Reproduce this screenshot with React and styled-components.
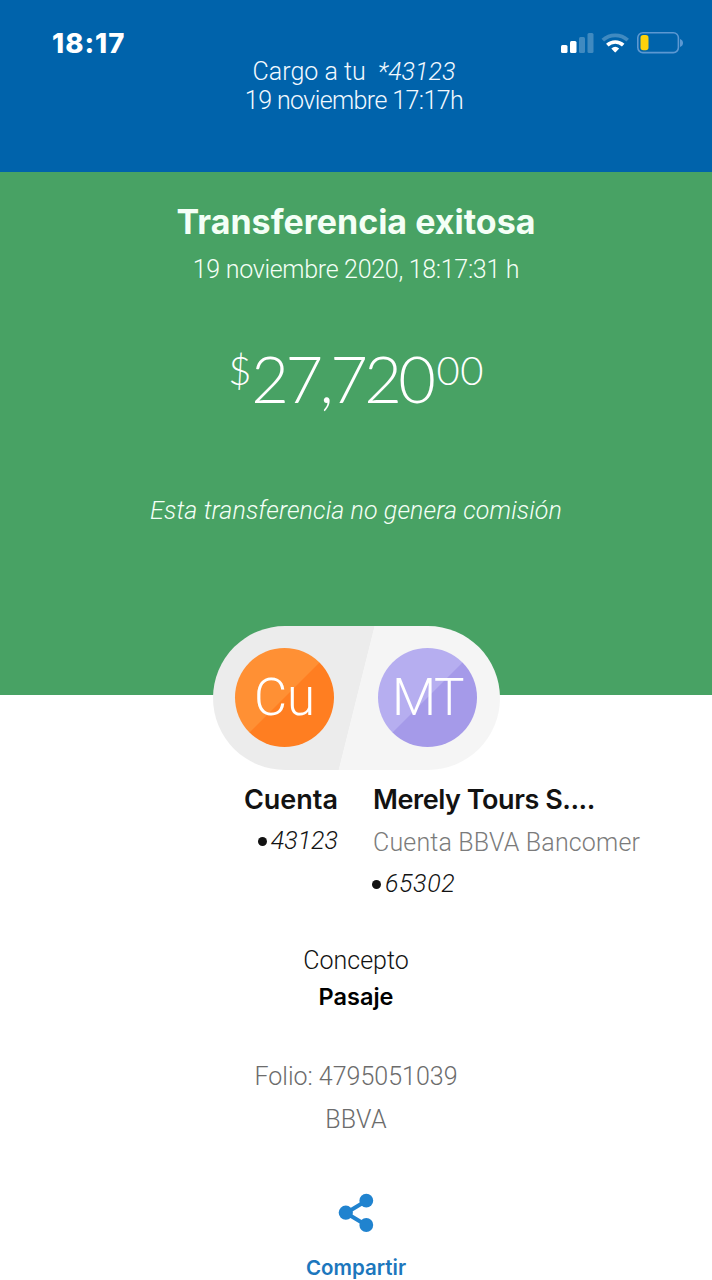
import React from 'react';
import styled, { createGlobalStyle } from 'styled-components';

const GlobalStyle = createGlobalStyle`
  * { box-sizing: border-box; }
  body {
    margin: 0;
    background: #fff;
    font-family: Roboto, "Liberation Sans", sans-serif;
    color: #121212;
  }
`;

const Screen = styled.main`
  display: flex;
  flex-direction: column;
  width: 712px;
  height: 1280px;
  overflow: hidden;
  background: #fff;
`;

const Header = styled.header`
  flex: none;
  display: flex;
  flex-direction: column;
  height: 172px;
  background: #0063ab;
  color: #f2f9ff;
`;

const StatusBar = styled.div`
  display: flex;
  justify-content: space-between;
  align-items: center;
  height: 26px;
  margin-top: 30px;
  padding: 0 28px 0 52px;
`;

const Clock = styled.time`
  font: 800 27.5px/28px Inter, sans-serif;
  letter-spacing: 1px;
  color: #fff;
`;

const StatusIcons = styled.svg`
  display: block;
  width: 124px;
  height: 26px;
`;

/* One line of text; the height sets the vertical rhythm. */
const Line = styled.p`
  margin: ${(p) => p.$top || 0}px 0 0;
  height: ${(p) => p.$height || 30}px;
  line-height: ${(p) => p.$height || 30}px;
  font-size: ${(p) => p.$size || 25}px;
  font-weight: 300;
  font-style: ${(p) => (p.$italic ? 'italic' : 'normal')};
  letter-spacing: ${(p) => p.$spacing || 0}px;
  color: ${(p) => p.$color || 'inherit'};
  white-space: pre;
`;

const StrongLine = styled(Line)`
  font-family: Inter, sans-serif;
  font-weight: ${(p) => p.$weight || 600};
`;

const ChargeInfo = styled.div`
  padding: 1px 4px 0 0;
  text-align: center;
`;

const Result = styled.section`
  flex: none;
  display: flex;
  flex-direction: column;
  align-items: center;
  height: 522.5px;
  padding-top: 30px;
  background: #48a264;
  color: #f4fff6;
`;

const Amount = styled.div`
  display: flex;
  align-items: flex-start;
  height: 64px;
  margin-top: 60px;
  font-family: Lato, sans-serif;
  font-weight: 300;
  color: #fff;
`;

const AmountPart = styled.span`
  font-size: ${(p) => p.$size}px;
  line-height: ${(p) => p.$height}px;
  letter-spacing: ${(p) => p.$spacing}px;
  margin-left: ${(p) => p.$left || 0}px;
`;

const Pill = styled.div`
  flex: none;
  display: flex;
  align-items: center;
  justify-content: space-between;
  width: 287px;
  height: 143.5px;
  margin: -68.5px auto 0;
  padding: 0 22.5px;
  border-radius: 72px;
  background: linear-gradient(104deg, #ececec 49.9%, #f5f5f5 50.1%);
`;

const Avatar = styled.div`
  width: 99px;
  height: 99px;
  border-radius: 50%;
  background: linear-gradient(135deg, ${(p) => p.$light} 49.7%, ${(p) => p.$dark} 50.3%);
  color: #fff;
  font-size: 51px;
  font-weight: 300;
  line-height: 100px;
  letter-spacing: ${(p) => p.$spacing}px;
  text-align: center;
`;

const Parties = styled.section`
  flex: none;
  display: grid;
  grid-template-columns: 338px 1fr;
  column-gap: 35px;
  height: 128px;
  margin-top: 14px;
`;

const Party = styled.div`
  display: flex;
  flex-direction: column;
  align-items: ${(p) => p.$align};
`;

const AccountNumber = styled.div`
  display: flex;
  align-items: center;
  gap: 4px;
  margin: ${(p) => p.$top}px 0 0 ${(p) => p.$left || 0}px;

  &::before {
    content: '';
    width: 9px;
    height: 9px;
    margin-top: 1px;
    border-radius: 50%;
    background: #121212;
  }
`;

const Details = styled.section`
  display: flex;
  flex-direction: column;
  align-items: center;
  margin-top: 34px;
`;

const ShareButton = styled.button`
  flex: none;
  display: flex;
  flex-direction: column;
  align-items: center;
  margin: 58px auto 0;
  padding: 0;
  border: 0;
  background: none;
  color: #1c77bd;
`;

const ShareIcon = styled.svg`
  display: block;
  width: 36px;
  height: 40px;
`;

export default function App() {
  return (
    <>
      <GlobalStyle />
      <Screen>
        <Header>
          <StatusBar>
            <Clock>18:17</Clock>
            <StatusIcons viewBox="560 30 124 26" aria-hidden="true">
              <g fill="#fff">
                <rect x="561" y="45" width="6.5" height="8" rx="1.5" />
                <rect x="570" y="41" width="6.5" height="12" rx="1.5" />
                <rect x="579" y="37" width="6" height="16" rx="1.5" opacity=".25" />
                <rect x="587.5" y="33" width="6" height="20" rx="1.5" opacity=".25" />
              </g>
              <g fill="none" stroke="#fff" strokeWidth="3.7">
                <path d="M602.8 40.2a18.3 18.3 0 0 1 24.9 0" opacity=".25" />
                <path d="M607.3 45.1a11.8 11.8 0 0 1 15.9 0" />
              </g>
              <path d="M611.3 48.6a6 6 0 0 1 7.9 0l-3.3 3.5q-.7.7-1.3 0z" fill="#fff" />
              <rect x="637.8" y="32.8" width="40.6" height="19.8" rx="5" fill="none" stroke="#5c98d2" strokeWidth="1.6" />
              <rect x="640.5" y="35" width="8" height="15.3" rx="2.8" fill="#ffd20a" />
              <path d="M680 39q3 1.2 3 4t-3 4z" fill="#5c98d2" />
            </StatusIcons>
          </StatusBar>
          <ChargeInfo>
            <Line $height={29}>Cargo a tu{'  '}<em>*43123</em></Line>
            <Line $height={29} $spacing={-0.6}>19 noviembre 17:17h</Line>
          </ChargeInfo>
        </Header>

        <Result>
          <StrongLine as="h1" $height={40} $size={34} $weight={700}>Transferencia exitosa</StrongLine>
          <Line $top={13} $spacing={-0.3}>19 noviembre 2020, 18:17:31 h</Line>
          <Amount>
            <AmountPart $size={40} $height={50}>$</AmountPart>
            <AmountPart $size={65} $height={66} $spacing={-3.6}>27,720</AmountPart>
            <AmountPart $size={40} $height={50} $spacing={0.5} $left={4}>00</AmountPart>
          </Amount>
          <Line $top={87} $italic $spacing={0.12}>Esta transferencia no genera comisión</Line>
        </Result>

        <Pill>
          <Avatar $light="#ff9034" $dark="#ff7e21">Cu</Avatar>
          <Avatar $light="#b6aef0" $dark="#a59ae9" $spacing={-1.5}>MT</Avatar>
        </Pill>

        <Parties>
          <Party $align="flex-end">
            <StrongLine $height={32} $size={27}>Cuenta</StrongLine>
            <AccountNumber $top={10}><Line $italic>43123</Line></AccountNumber>
          </Party>
          <Party $align="flex-start">
            <StrongLine $height={32} $size={27} $spacing={-0.45}>Merely Tours S....</StrongLine>
            <Line $top={12} $color="#7b7b7b" $spacing={0.17}>Cuenta BBVA Bancomer</Line>
            <AccountNumber $top={11} $left={-1}><Line $italic $spacing={0.6}>65302</Line></AccountNumber>
          </Party>
        </Parties>

        <Details>
          <Line>Concepto</Line>
          <StrongLine $top={6} $size={23.5} $color="#000">Pasaje</StrongLine>
          <Line $top={50} $color="#6c6c6c">Folio: 4795051039</Line>
          <Line $top={13} $color="#6c6c6c" $spacing={0.3}>BBVA</Line>
        </Details>

        <ShareButton>
          <ShareIcon viewBox="338 1193 36 40" aria-hidden="true">
            <path d="M366 1201l-20 12 20 12" fill="none" stroke="#2083cf" strokeWidth="4" />
            <g fill="#2083cf">
              <circle cx="366.3" cy="1200.7" r="6.9" />
              <circle cx="345.8" cy="1212.7" r="7.1" />
              <circle cx="366.3" cy="1225" r="6.9" />
            </g>
          </ShareIcon>
          <StrongLine as="span" $top={20} $size={20.5}>Compartir</StrongLine>
        </ShareButton>
      </Screen>
    </>
  );
}
